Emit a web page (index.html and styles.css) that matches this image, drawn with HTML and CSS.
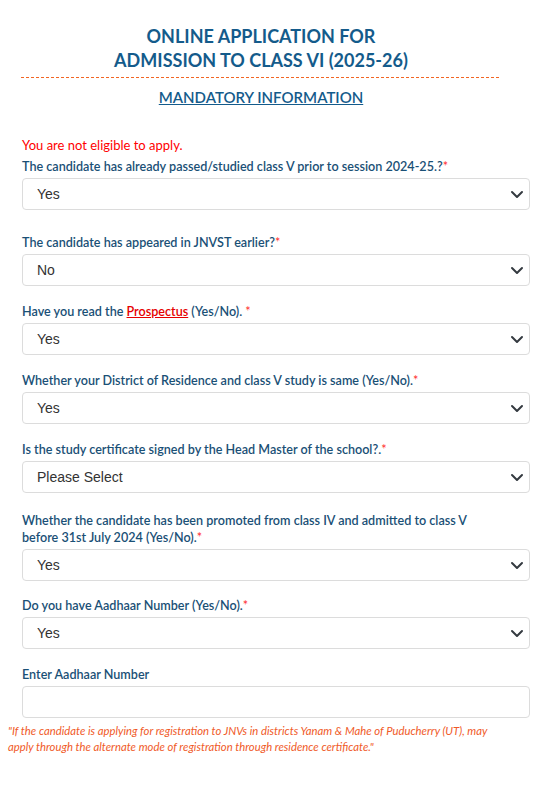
FILE: index.html
```html
<!DOCTYPE html>
<html lang="en">
<head>
  <meta charset="UTF-8">
  <meta name="viewport" content="width=device-width, initial-scale=1.0">
  <title>Online Application - Mandatory Information</title>
  <link rel="stylesheet" href="styles.css">
</head>
<body>

  <div class="header">
    <h1 class="title">ONLINE APPLICATION FOR<br>ADMISSION TO CLASS VI (2025-26)</h1>
    <div class="divider"></div>
    <h2 class="subtitle">MANDATORY INFORMATION</h2>
  </div>

  <form class="form-wrap">
    <div class="group first">
      <p class="error">You are not eligible to apply.</p>
      <label class="label">The candidate has already passed/studied class V prior to session 2024-25.?<span class="req">*</span></label>
      <div class="select-box">
        <select class="select"><option>Yes</option><option>No</option></select>
        <svg class="chevron" viewBox="0 0 16 16"><path d="M3 6l5 5 5-5"/></svg>
      </div>
    </div>

    <div class="group">
      <label class="label">The candidate has appeared in JNVST earlier?<span class="req">*</span></label>
      <div class="select-box">
        <select class="select"><option>No</option><option>Yes</option></select>
        <svg class="chevron" viewBox="0 0 16 16"><path d="M3 6l5 5 5-5"/></svg>
      </div>
    </div>

    <div class="group">
      <label class="label">Have you read the <a href="#" class="link">Prospectus</a> (Yes/No). <span class="req">*</span></label>
      <div class="select-box">
        <select class="select"><option>Yes</option><option>No</option></select>
        <svg class="chevron" viewBox="0 0 16 16"><path d="M3 6l5 5 5-5"/></svg>
      </div>
    </div>

    <div class="group">
      <label class="label">Whether your District of Residence and class V study is same (Yes/No).<span class="req">*</span></label>
      <div class="select-box">
        <select class="select"><option>Yes</option><option>No</option></select>
        <svg class="chevron" viewBox="0 0 16 16"><path d="M3 6l5 5 5-5"/></svg>
      </div>
    </div>

    <div class="group">
      <label class="label">Is the study certificate signed by the Head Master of the school?.<span class="req">*</span></label>
      <div class="select-box">
        <select class="select"><option>Please Select</option><option>Yes</option><option>No</option></select>
        <svg class="chevron" viewBox="0 0 16 16"><path d="M3 6l5 5 5-5"/></svg>
      </div>
    </div>

    <div class="group tall">
      <label class="label narrow">Whether the candidate has been promoted from class IV and admitted to class V before 31st July 2024 (Yes/No).<span class="req">*</span></label>
      <div class="select-box">
        <select class="select"><option>Yes</option><option>No</option></select>
        <svg class="chevron" viewBox="0 0 16 16"><path d="M3 6l5 5 5-5"/></svg>
      </div>
    </div>

    <div class="group">
      <label class="label">Do you have Aadhaar Number (Yes/No).<span class="req">*</span></label>
      <div class="select-box">
        <select class="select"><option>Yes</option><option>No</option></select>
        <svg class="chevron" viewBox="0 0 16 16"><path d="M3 6l5 5 5-5"/></svg>
      </div>
    </div>

    <div class="group last">
      <label class="label">Enter Aadhaar Number</label>
      <input type="text" class="input">
    </div>
  </form>

  <p class="note">"If the candidate is applying for registration to JNVs in districts Yanam &amp; Mahe of Puducherry (UT), may apply through the alternate mode of registration through residence certificate."</p>

</body>
</html>
```

FILE: styles.css
```css
body {
  margin: 0;
  padding: 0 8px;
  font-family: Lato, "Open Sans", sans-serif;
  background-color: #fff;
  color: #333;
}
.header {
  width: 480px;
  margin-left: 13px;
  padding-top: 24px;
  text-align: center;
}
.title {
  margin: 0;
  padding-bottom: 5px;
  font-size: 18px;
  font-weight: 700;
  line-height: 24px;
  color: #145b8b;
}
.divider {
  height: 1px;
  background: repeating-linear-gradient(to right, #f26522 0 3px, transparent 3px 5px);
}
.subtitle {
  margin: 10px 0 0;
  font-size: 15px;
  font-weight: 600;
  line-height: 18px;
  color: #145b8b;
  text-decoration: underline;
}
.form-wrap {
  padding: 0 14px;
  margin-top: 31px;
}
.group {
  margin-bottom: 17px;
}
.group.first {
  margin-bottom: 24px;
}
.group.tall {
  margin-top: 19px;
  margin-bottom: 16px;
}
.group.last {
  margin-bottom: 5px;
}
.error {
  margin: 0 0 4px;
  font-size: 13px;
  line-height: 17px;
  color: #ff0000;
}
.label {
  display: block;
  margin-bottom: 3px;
  font-size: 12.6px;
  font-weight: 600;
  line-height: 17px;
  color: #1a5076;
}
.label.narrow {
  max-width: 470px;
}
.req {
  color: #ff2b2b;
  font-weight: 400;
}
.link {
  color: #e60000;
  text-decoration: underline;
}
.select-box {
  position: relative;
}
.select,
.input {
  display: block;
  box-sizing: border-box;
  width: 100%;
  height: 32px;
  padding: 0 14px;
  font-family: "Liberation Sans", Arial, sans-serif;
  font-size: 14px;
  color: #333;
  background-color: #fff;
  border: 1px solid #dcdcdc;
  border-radius: 4px;
  appearance: none;
  outline: none;
}
.chevron {
  position: absolute;
  right: 5px;
  top: 8px;
  width: 16px;
  height: 16px;
  fill: none;
  stroke: #343a40;
  stroke-width: 2;
  stroke-linecap: round;
  stroke-linejoin: round;
  pointer-events: none;
}
.note {
  margin: 0;
  padding-right: 30px;
  font-size: 11.3px;
  font-style: italic;
  line-height: 16px;
  color: #f05a28;
}
```
